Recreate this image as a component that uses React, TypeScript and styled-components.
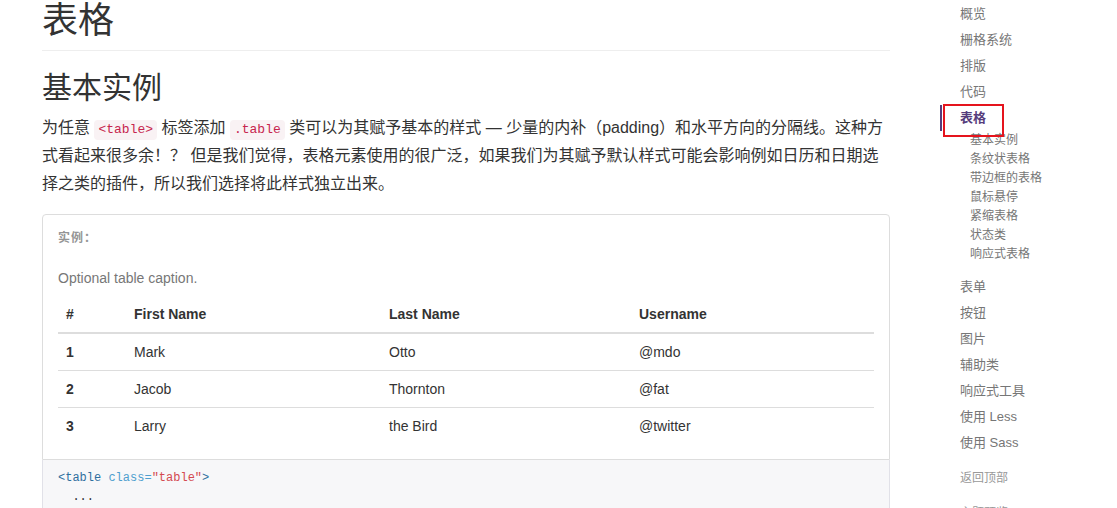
import { FC } from 'react'
import styled, { createGlobalStyle } from 'styled-components'

const GlobalStyle = createGlobalStyle`
  html, body {
    margin: 0;
    padding: 0;
    background: #fff;
  }
  body {
    font-family: "Liberation Sans", "Noto Sans CJK SC", sans-serif;
    font-size: 14px;
    line-height: 1.42857;
    color: #333;
    overflow: hidden;
  }
`

const Page = styled.div`
  display: grid;
  grid-template-columns: 848px 177px;
  column-gap: 50px;
  padding-left: 42px;
  height: 508px;
  overflow: hidden;
`

const Main = styled.main`
  display: flex;
  flex-direction: column;
`

const PageHeader = styled.div`
  padding: 1px 0 9px;
  border-bottom: 1px solid #eee;
  margin-bottom: 20px;
`

const Title = styled.h1`
  margin: 0;
  font-size: 36px;
  line-height: 40px;
  font-weight: 400;
`

const SubTitle = styled.h2`
  margin: 0 0 10px;
  font-size: 30px;
  line-height: 33px;
  font-weight: 400;
`

const Lead = styled.p`
  margin: 0 0 16px;
  font-size: 16px;
  line-height: 28px;
`

const InlineCode = styled.code`
  display: inline-block;
  font-family: "Liberation Mono", monospace;
  font-size: 13px;
  line-height: 18px;
  padding: 1px 4px;
  color: #c7254e;
  background: #f9f2f4;
  border-radius: 4px;
`

const Example = styled.div`
  position: relative;
  padding: 45px 15px 15px;
  border: 1px solid #ddd;
  border-radius: 4px 4px 0 0;

  &::after {
    content: '实例：';
    position: absolute;
    top: 15px;
    left: 15px;
    font-size: 12px;
    line-height: 17px;
    font-weight: 700;
    color: #959595;
    letter-spacing: 1px;
  }
`

const Table = styled.table`
  width: 100%;
  border-collapse: collapse;
  table-layout: fixed;
  font-size: 14px;
`

const Caption = styled.caption`
  padding: 8px 0;
  text-align: left;
  color: #777;
  line-height: 20px;
`

const Th = styled.th`
  padding: 8px;
  line-height: 20px;
  text-align: left;
  font-weight: 700;
  border-bottom: 2px solid #ddd;
`

const Td = styled.td<{ $strong?: boolean }>`
  padding: 8px;
  line-height: 20px;
  border-top: 1px solid #ddd;
  font-weight: ${p => (p.$strong ? 700 : 400)};
`

const Highlight = styled.pre`
  margin: 0;
  padding: 9px 14px 9px 15px;
  background: #f7f7f9;
  border: 1px solid #e1e1e8;
  border-top: 0;
  font-family: "Liberation Mono", monospace;
  font-size: 12px;
  line-height: 19px;
  color: #333;
`

const Tok = styled.span<{ $kind: 'tag' | 'attr' | 'str' }>`
  color: ${p => (p.$kind === 'tag' ? '#2f6f9f' : p.$kind === 'attr' ? '#4f9fcf' : '#d44950')};
`

const Sidebar = styled.nav`
  display: flex;
  flex-direction: column;
  padding-top: 1px;
`

const NavList = styled.ul`
  list-style: none;
  margin: 0;
  padding: 0;
`

const NavLink = styled.a<{ $active?: boolean }>`
  position: relative;
  display: block;
  padding: 4px 20px;
  font-size: 13px;
  line-height: 18px;
  font-weight: 400;
  color: #767676;
  text-decoration: none;

  ${p =>
    p.$active &&
    `
    padding-left: 18px;
    font-weight: 700;
    color: #563d7c;
    border-left: 2px solid #563d7c;

    &::after {
      content: '';
      position: absolute;
      left: 1px;
      top: -1px;
      width: 57px;
      height: 29px;
      border: 2px solid #e5141d;
    }
  `}
`

const SubList = styled.ul`
  list-style: none;
  margin: 0;
  padding: 0 0 10px;
`

const SubLink = styled.a`
  display: block;
  padding: 1px 20px 1px 30px;
  font-size: 12px;
  line-height: 17px;
  color: #767676;
  text-decoration: none;
`

const BackLink = styled.a`
  display: block;
  margin: 10px 0 0 10px;
  padding: 4px 10px;
  font-size: 12px;
  line-height: 17px;
  color: #999;
  text-decoration: none;
`

const rows = [
  { id: 1, first: 'Mark', last: 'Otto', user: '@mdo' },
  { id: 2, first: 'Jacob', last: 'Thornton', user: '@fat' },
  { id: 3, first: 'Larry', last: 'the Bird', user: '@twitter' },
]

const topNav = ['概览', '栅格系统', '排版', '代码']
const subNav = ['基本实例', '条纹状表格', '带边框的表格', '鼠标悬停', '紧缩表格', '状态类', '响应式表格']
const bottomNav = ['表单', '按钮', '图片', '辅助类', '响应式工具', '使用 Less', '使用 Sass']

const App: FC = () => {
  return (
    <>
      <GlobalStyle />
      <Page>
        <Main>
          <PageHeader>
            <Title>表格</Title>
          </PageHeader>
          <SubTitle>基本实例</SubTitle>
          <Lead>
            为任意 <InlineCode>&lt;table&gt;</InlineCode> 标签添加 <InlineCode>.table</InlineCode>{' '}
            类可以为其赋予基本的样式 — 少量的内补（padding）和水平方向的分隔线。这种方式看起来很多余！？
            但是我们觉得，表格元素使用的很广泛，如果我们为其赋予默认样式可能会影响例如日历和日期选择之类的插件，所以我们选择将此样式独立出来。
          </Lead>
          <Example>
            <Table>
              <Caption>Optional table caption.</Caption>
              <colgroup>
                <col style={{ width: 68 }} />
                <col style={{ width: 255 }} />
                <col style={{ width: 250 }} />
                <col />
              </colgroup>
              <thead>
                <tr>
                  <Th>#</Th>
                  <Th>First Name</Th>
                  <Th>Last Name</Th>
                  <Th>Username</Th>
                </tr>
              </thead>
              <tbody>
                {rows.map(r => (
                  <tr key={r.id}>
                    <Td $strong>{r.id}</Td>
                    <Td>{r.first}</Td>
                    <Td>{r.last}</Td>
                    <Td>{r.user}</Td>
                  </tr>
                ))}
              </tbody>
            </Table>
          </Example>
          <Highlight>
            <Tok $kind="tag">&lt;table</Tok> <Tok $kind="attr">class=</Tok>
            <Tok $kind="str">"table"</Tok>
            <Tok $kind="tag">&gt;</Tok>
            {'\n  ...\n'}
          </Highlight>
        </Main>
        <Sidebar>
          <NavList>
            {topNav.map(item => (
              <li key={item}>
                <NavLink>{item}</NavLink>
              </li>
            ))}
            <li>
              <NavLink $active>表格</NavLink>
              <SubList>
                {subNav.map(item => (
                  <li key={item}>
                    <SubLink>{item}</SubLink>
                  </li>
                ))}
              </SubList>
            </li>
            {bottomNav.map(item => (
              <li key={item}>
                <NavLink>{item}</NavLink>
              </li>
            ))}
          </NavList>
          <BackLink>返回顶部</BackLink>
          <BackLink>主题预览</BackLink>
        </Sidebar>
      </Page>
    </>
  )
}

export default App
